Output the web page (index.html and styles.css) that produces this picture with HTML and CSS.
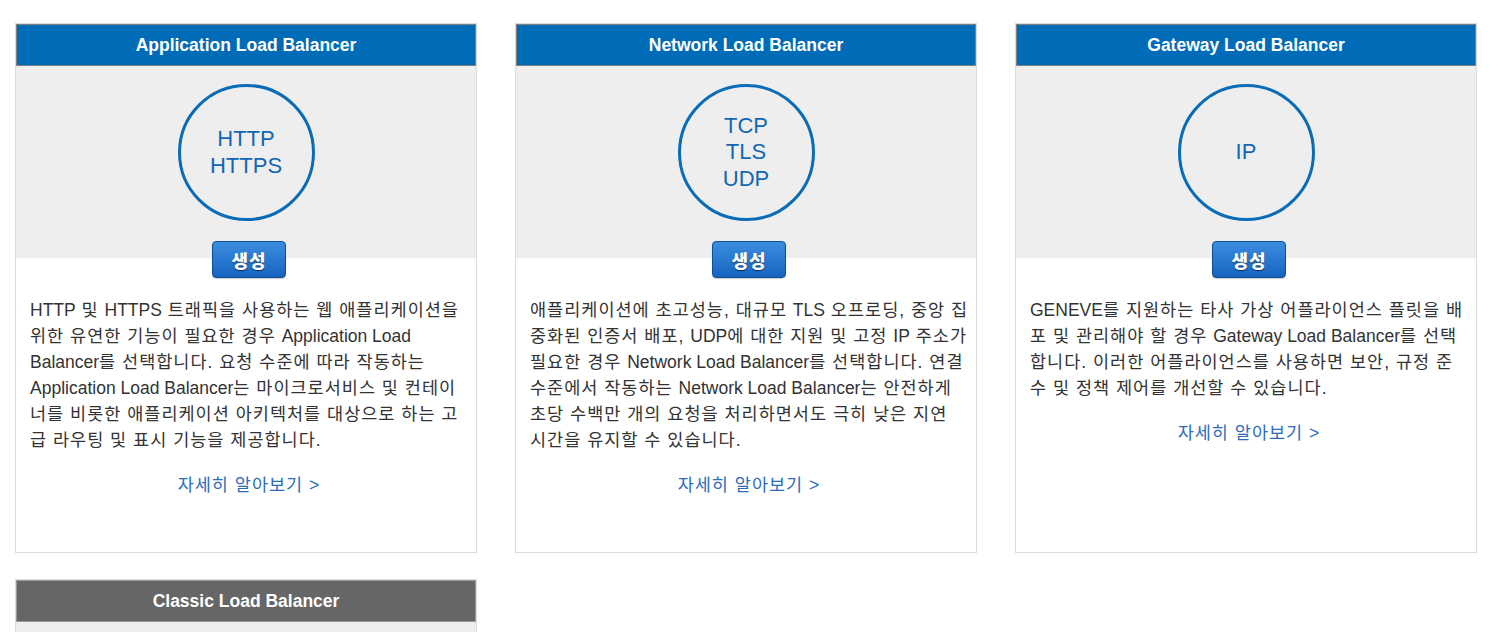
FILE: index.html
```html
<!DOCTYPE html>
<html lang="ko">
<head>
<meta charset="utf-8">
<title>Load Balancer 유형 선택</title>
<link rel="stylesheet" href="styles.css">
</head>
<body>
<div class="grid">
  <section class="card">
    <h2 class="card-head">Application Load Balancer</h2>
    <div class="visual">
      <div class="circle"><span>HTTP<br>HTTPS</span></div>
      <button class="btn">생성</button>
    </div>
    <p class="desc"><span class="en">HTTP</span> 및 <span class="en">HTTPS</span> 트래픽을 사용하는 웹 애플리케이션을 위한 유연한 기능이 필요한 경우 <span class="en">Application Load Balancer</span>를 선택합니다. 요청 수준에 따라 작동하는 <span class="en">Application Load Balancer</span>는 마이크로서비스 및 컨테이너를 비롯한 애플리케이션 아키텍처를 대상으로 하는 고급 라우팅 및 표시 기능을 제공합니다.</p>
    <a class="more" href="#">자세히 알아보기 <span class="en">&gt;</span></a>
  </section>
  <section class="card">
    <h2 class="card-head">Network Load Balancer</h2>
    <div class="visual">
      <div class="circle"><span>TCP<br>TLS<br>UDP</span></div>
      <button class="btn">생성</button>
    </div>
    <p class="desc">애플리케이션에 초고성능, 대규모 <span class="en">TLS</span> 오프로딩, 중앙 집중화된 인증서 배포, <span class="en">UDP</span>에 대한 지원 및 고정 <span class="en">IP</span> 주소가 필요한 경우 <span class="en">Network Load Balancer</span>를 선택합니다. 연결 수준에서 작동하는 <span class="en">Network Load Balancer</span>는 안전하게 초당 수백만 개의 요청을 처리하면서도 극히 낮은 지연 시간을 유지할 수 있습니다.</p>
    <a class="more" href="#">자세히 알아보기 <span class="en">&gt;</span></a>
  </section>
  <section class="card">
    <h2 class="card-head">Gateway Load Balancer</h2>
    <div class="visual">
      <div class="circle"><span>IP</span></div>
      <button class="btn">생성</button>
    </div>
    <p class="desc"><span class="en">GENEVE</span>를 지원하는 타사 가상 어플라이언스 플릿을 배포 및 관리해야 할 경우 <span class="en">Gateway Load Balancer</span>를 선택합니다. 이러한 어플라이언스를 사용하면 보안, 규정 준수 및 정책 제어를 개선할 수 있습니다.</p>
    <a class="more" href="#">자세히 알아보기 <span class="en">&gt;</span></a>
  </section>
  <section class="card">
    <h2 class="card-head classic">Classic Load Balancer</h2>
    <div class="visual"></div>
  </section>
</div>
</body>
</html>
```
FILE: styles.css
```css
html, body {
  margin: 0;
  padding: 0;
  background: #fff;
}
body {
  font-family: "Liberation Sans", Arial, "Noto Sans CJK KR", sans-serif;
  font-size: 17.5px;
  color: #333;
}
.grid {
  display: grid;
  grid-template-columns: repeat(3, 462px);
  column-gap: 38px;
  row-gap: 26px;
  padding: 23px 0 0 15px;
}
.card {
  border: 1px solid #dcdcdc;
  display: flex;
  flex-direction: column;
  align-items: stretch;
  padding-bottom: 54px;
}
.card-head {
  margin: 0;
  height: 40px;
  line-height: 40px;
  border: 1px solid #808080;
  background: #006cb7;
  color: #fff;
  font-size: 17.5px;
  font-weight: bold;
  text-align: center;
}
.card-head.classic {
  background: #666;
  border-color: #9a9a9a;
}
.visual {
  display: flex;
  flex-direction: column;
  align-items: center;
  padding-top: 18px;
  background: linear-gradient(#eeeeee 0, #eeeeee 192px, #fff 192px);
  min-height: 100px;
}
.circle {
  width: 131px;
  height: 131px;
  border: 3px solid #0a6cb6;
  border-radius: 50%;
  display: flex;
  align-items: center;
  justify-content: center;
  text-align: center;
  color: #1167b4;
  font-size: 22px;
  line-height: 26.5px;
}
.btn {
  margin: 20px 0 0 6px;
  width: 74px;
  height: 37px;
  border: 1px solid #0d4f96;
  border-radius: 4px;
  background: linear-gradient(#3a8ee0, #1763c0);
  color: #fff;
  font-family: "Noto Sans CJK KR", sans-serif;
  font-size: 18px;
  font-weight: 900;
  letter-spacing: 1px;
  text-shadow: 0 1px 1px rgba(0, 0, 0, 0.6);
  padding: 0;
  box-shadow: 0 1px 1px rgba(0, 0, 0, 0.2);
}
.desc {
  margin: 19px 0 0;
  padding: 0 6px 0 14px;
  line-height: 26px;
  letter-spacing: 1px;
}
.en {
  letter-spacing: 0;
}
.more {
  display: block;
  margin-top: 19px;
  padding-left: 5px;
  line-height: 26px;
  text-align: center;
  color: #2d6cb7;
  text-decoration: none;
  letter-spacing: 1px;
}
```
